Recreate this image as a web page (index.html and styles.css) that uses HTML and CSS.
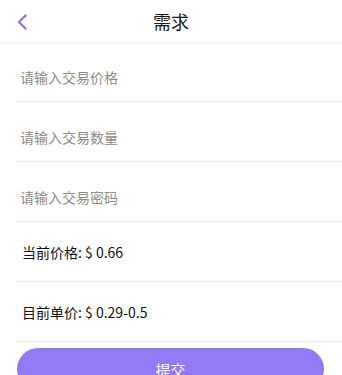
FILE: index.html
```html
<!DOCTYPE html>
<html lang="zh">
<head>
<meta charset="utf-8">
<title>需求</title>
<link rel="stylesheet" href="styles.css">
</head>
<body>
<div class="page">
  <header class="topbar">
    <span class="back">
      <svg width="12" height="16" viewBox="0 0 12 16"><polyline points="9.5,1.5 3,8 9.5,14.5" fill="none" stroke="#8f7ad9" stroke-width="2.4" stroke-linecap="round" stroke-linejoin="round"/></svg>
    </span>
    <h1 class="title">需求</h1>
  </header>
  <div class="form">
    <div class="row row-input"><input class="field" type="text" placeholder="请输入交易价格"></div>
    <div class="row row-input"><input class="field" type="text" placeholder="请输入交易数量"></div>
    <div class="row row-input"><input class="field" type="password" placeholder="请输入交易密码"></div>
    <div class="row"><span class="info">当前价格: $ 0.66</span></div>
    <div class="row"><span class="info">目前单价: $ 0.29-0.5</span></div>
  </div>
  <button class="submit" type="button">提交</button>
</div>
</body>
</html>
```

FILE: styles.css
```css
* { box-sizing: border-box; }
html, body { margin: 0; padding: 0; background: #fff; }
body {
  font-family: "Noto Sans CJK SC", "Noto Sans", sans-serif;
  color: #222;
  overflow: hidden;
}
.page { width: 342px; }
.topbar {
  height: 42px;
  display: flex;
  align-items: center;
  justify-content: center;
  position: relative;
  box-shadow: 0 1px 2px rgba(0, 0, 0, 0.06);
  background: #fff;
}
.back {
  position: absolute;
  left: 16px;
  top: 14px;
  width: 12px;
  height: 16px;
  display: block;
}
.back svg { display: block; }
.title {
  margin: 0;
  font-size: 18px;
  font-weight: 400;
  line-height: 24px;
  color: #1a1a1a;
  margin-top: -1px;
}
.form { padding-left: 16px; }
.row {
  height: 60px;
  border-bottom: 1px solid #ececec;
  display: flex;
  align-items: center;
}
.row-input { padding-top: 11px; }
.field {
  border: none;
  outline: none;
  background: transparent;
  font-family: "Noto Sans CJK SC", "Noto Sans", sans-serif;
  font-size: 14px;
  padding: 0 4px;
  width: 100%;
  color: #333;
}
.field::placeholder { color: #8c8c8c; }
.info {
  padding-left: 6px;
  font-size: 14px;
  color: #111;
}
.submit {
  display: block;
  margin: 6px 0 0 17px;
  width: 307px;
  height: 42px;
  border: none;
  border-radius: 21px;
  background: #9479f5;
  color: #fff;
  font-family: "Noto Sans CJK SC", "Noto Sans", sans-serif;
  font-size: 15px;
}
```
